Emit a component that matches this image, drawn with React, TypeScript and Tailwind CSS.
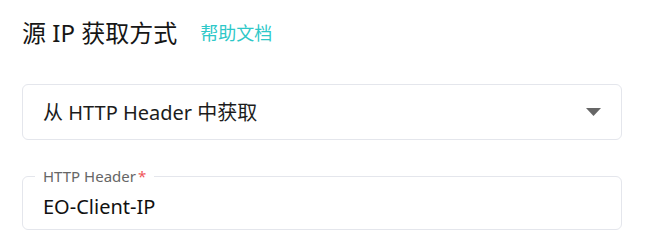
const font = "font-['Noto_Sans','Noto_Sans_CJK_SC',sans-serif]"

function SourceIpSetting() {
  return (
    <div className={`${font} bg-white min-h-screen pl-[22px] pt-[17px]`}>
      <div className="flex items-center">
        <h2 className="text-[24px] leading-8 font-normal text-[#161616]">源 IP 获取方式</h2>
        <a href="#" className="ml-[23px] text-[18px] leading-6 text-[#2ec8c8]">
          帮助文档
        </a>
      </div>

      <div className="mt-[35px] w-[600px] h-14 flex items-center justify-between pl-5 pr-5 border border-[#e4e6ec] rounded-md">
        <span className="text-[20px] leading-7 pt-0.5 text-[#1c1c1c]">从 HTTP Header 中获取</span>
        <svg width="15" height="8" viewBox="0 0 15 8" className="shrink-0">
          <polygon points="0,0 15,0 7.5,8" fill="#666666" />
        </svg>
      </div>

      <fieldset className="mt-[26px] w-[600px] border border-[#e4e6ec] rounded-md px-5 pb-2">
        <legend className="-ml-2 px-2 text-[15px] leading-5 text-[#666666]">
          HTTP Header<span className="ml-0.5 text-[#f0565a]">*</span>
        </legend>
        <input
          className="mt-[7px] w-full h-7 text-[20px] leading-7 text-[#111111] outline-none bg-transparent"
          defaultValue="EO-Client-IP"
        />
      </fieldset>
    </div>
  )
}

export default function App() {
  return <SourceIpSetting />
}
